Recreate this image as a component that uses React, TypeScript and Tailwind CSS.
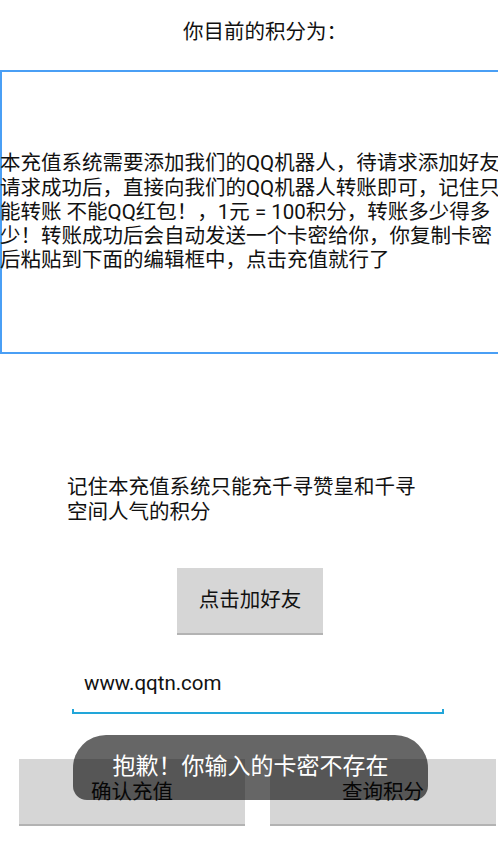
import React from "react";

export default function App() {
  const lines = [
    "本充值系统需要添加我们的QQ机器人，待请求添加好友",
    "请求成功后，直接向我们的QQ机器人转账即可，记住只",
    "能转账 不能QQ红包！，1元 = 100积分，转账多少得多",
    "少！转账成功后会自动发送一个卡密给你，你复制卡密",
    "后粘贴到下面的编辑框中，点击充值就行了",
  ];
  return (
    <div className="relative w-[498px] h-[848px] overflow-hidden bg-white text-black font-['Roboto','Noto_Sans_CJK_SC',sans-serif]">
      <div className="pt-[20px] pl-[183px] text-[20.5px] leading-[24px] whitespace-nowrap text-[#111]">
        你目前的积分为：
      </div>
      <div className="mt-[26px] w-[520px] h-[284px] border-2 border-[#4a9ff5] flex flex-col justify-center">
        {lines.map((l, i) => (
          <div key={i} className="text-[20.5px] leading-[24.2px] whitespace-nowrap text-[#111] -ml-[2px]">
            {l}
          </div>
        ))}
      </div>
      <div className="mt-[121px] pl-[67px] text-[20.5px] leading-[25px] text-[#111]">
        <div className="whitespace-nowrap">记住本充值系统只能充千寻赞皇和千寻</div>
        <div className="whitespace-nowrap">空间人气的积分</div>
      </div>
      <div className="mt-[43px] ml-[177px] w-[146px] h-[67px] bg-[#d6d6d6] border-b-2 border-[#b3b3b3] flex items-center justify-center text-[20.5px] text-[#111]">
        点击加好友
      </div>
      <div className="mt-[36px] ml-[72px] w-[372px]">
        <div className="pl-[12px] text-[20.5px] leading-[24px] text-[#111]">www.qqtn.com</div>
        <div className="mt-[14px] h-[5px] border-x-2 border-b-2 border-[#22a6d9]" />
      </div>
      <div className="mt-[45px] pl-[19px] flex gap-[25px]">
        <div className="w-[226px] h-[67px] pt-[2px] bg-[#d6d6d6] border-b-2 border-[#b3b3b3] flex items-center justify-center text-[20.5px] text-[#111]">
          确认充值
        </div>
        <div className="w-[226px] h-[67px] pt-[2px] bg-[#d6d6d6] border-b-2 border-[#b3b3b3] flex items-center justify-center text-[20.5px] text-[#111]">
          查询积分
        </div>
      </div>
      <div className="absolute left-[73px] top-[735px] w-[355px] h-[65px] rounded-t-[33px] rounded-b-[14px] bg-black/60 flex items-center justify-center text-white text-[23px] whitespace-nowrap">
        抱歉！你输入的卡密不存在
      </div>
    </div>
  );
}
